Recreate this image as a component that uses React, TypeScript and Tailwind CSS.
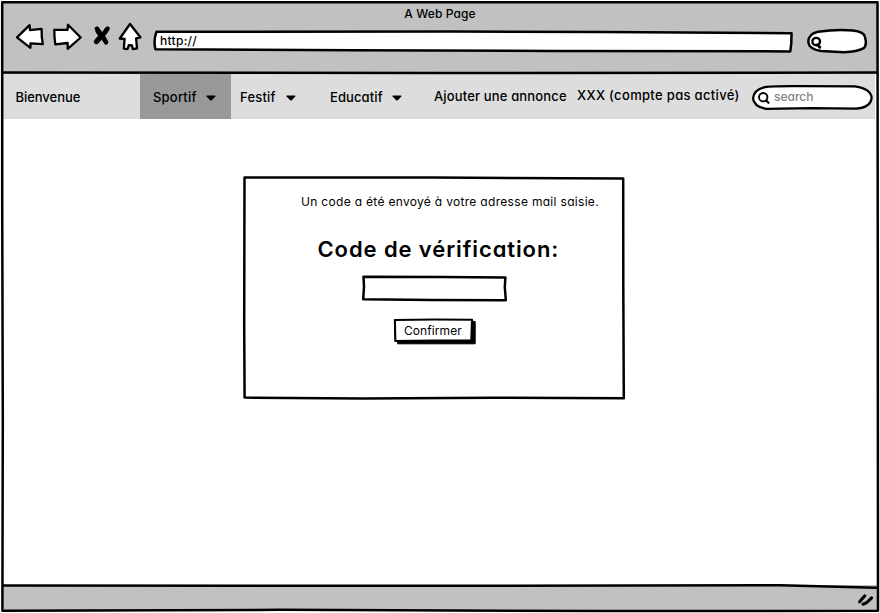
import type { ReactNode } from 'react';

const font =
  "font-['Inter','Noto_Sans',sans-serif] font-medium [font-feature-settings:'cv11'_1,'ss03'_1] text-black";

/* Pen outline laid over the box that holds it, in that box's own pixels. */
function Outline({ children }: { children: ReactNode }) {
  return (
    <svg
      aria-hidden="true"
      className="pointer-events-none absolute inset-0 h-full w-full overflow-visible"
      fill="none"
      stroke="black"
      strokeWidth="2.5"
      strokeLinejoin="round"
      strokeLinecap="round"
    >
      {children}
    </svg>
  );
}

function Caret({ className }: { className: string }) {
  return (
    <svg viewBox="0 0 10 6" className={`h-[6px] w-[10px] ${className}`}>
      <path d="M1 .5 9 .5Q10 .8 9.3 1.6L5.8 5.2Q5 5.9 4.2 5.2L.6 1.6Q0 .7 1 .5Z" />
    </svg>
  );
}

function Toolbar() {
  return (
    <div className="flex h-[50px] items-start pl-[15px]">
      <svg
        className="h-[32px] w-[128px] shrink-0"
        viewBox="15 22 128 32"
        fill="white"
        stroke="black"
        strokeWidth="2.3"
        strokeLinejoin="round"
        strokeLinecap="round"
      >
        <path d="M17 37.4 29.6 25.2 30 30.2 41.6 28.8 41.8 37 42.8 44.2 30.5 43.3 30.4 47.8Z" />
        <path d="M80.7 37.5 68 24.8 67.5 29.8 54.3 29.8 54.5 37 55.3 44.4 67.6 43 67.7 48.8Z" />
        <path d="M130 24 140.4 37.3 136.1 38.3 137 48.4 132.8 49.1 132 45.4 128.8 45.2 127.6 49 123.8 48.6 124.6 39 119.8 38.5Z" />
        <path
          fill="black"
          strokeWidth="1"
          d="M95.2 28.2Q96 26.2 98 27L102.2 32.8 105.8 27.6Q108 26 109.4 27.8Q109.4 30.5 104.6 35.8L108 42Q107.8 44.4 105.4 44.4L101.8 39.2 97.3 43.9Q95 44.4 94 42Q94.8 39.4 98.6 35.8Q95.2 32 95.2 28.2Z"
        />
      </svg>
      <div className="relative ml-[10px] mt-[9px] flex h-[21px] w-[640px] items-center pl-[7px]">
        <Outline>
          <path
            fill="white"
            d="M3.5 .8 300 .6 450 1 638.5 2.2Q638.7 12 637.3 20.4L400 20 200 19.3 2.4 18.3Q.2 9 3.5 .8Z"
          />
        </Outline>
        <span className="relative pb-[2px] text-[12px] leading-[18px] tracking-[0.3px]">http://</span>
      </div>
      <div className="relative ml-[14px] mt-[7px] flex h-[24px] w-[60px] items-center">
        <Outline>
          <path
            fill="white"
            d="M11 2.8Q30 0 46 1.6Q57 2.8 58 8Q60.2 16 56.8 19.2Q50 23 37 23.2L14 22Q1.8 20 1.3 13Q1.6 4.6 11 2.8Z"
          />
          <ellipse cx="9.2" cy="12.6" rx="3.8" ry="3.7" strokeWidth="2.4" />
          <path strokeWidth="2.9" d="M10.4 15.8 12.8 18.2" />
        </Outline>
      </div>
    </div>
  );
}

function Nav() {
  return (
    <nav className="flex h-[45px] w-[872px] items-center bg-[#dddddd] pt-px text-[13px] leading-[20px] whitespace-nowrap">
      <span className="w-[137px] pl-[12.5px] tracking-[-0.05px]">Bienvenue</span>
      <div className="-mt-px flex h-[45px] w-[91px] items-center bg-[#999999] pt-px pl-[13px]">
        <span className="w-[53px] tracking-[0.2px]">Sportif</span>
        <Caret className="mt-[2px]" />
      </div>
      <div className="flex w-[90px] items-center pl-[9px]">
        <span className="w-[46px] tracking-[0.2px]">Festif</span>
        <Caret className="mt-[2px]" />
      </div>
      <div className="flex w-[113px] items-center pl-[9px]">
        <span className="w-[62px] tracking-[0.1px]">Educatif</span>
        <Caret className="mt-[2px]" />
      </div>
      <span className="w-[143px] pb-[2px] tracking-[0.15px]">Ajouter une annonce</span>
      <span className="w-[175px] pb-[4px] tracking-[0.33px]">XXX (compte pas activé)</span>
      <div className="relative flex h-[25px] w-[121px] items-center pl-[22px]">
        <Outline>
          <path
            fill="white"
            strokeWidth="2.2"
            d="M13 2.2Q20 .9 50 1.2L103 1.4Q119.3 4 119.6 13Q118.5 22.5 104 23.6L60 23.2 14 23.8Q2 21.5 1 13.5Q1.8 4.6 13 2.2Z"
          />
          <ellipse cx="11.2" cy="12.2" rx="4.2" ry="4.2" strokeWidth="1.9" />
          <path strokeWidth="2.2" d="M14.2 15.4 16.5 17.8" />
        </Outline>
        <span className="relative pb-[1px] text-[12px] text-[#838383]">search</span>
      </div>
    </nav>
  );
}

function VerificationCard() {
  return (
    <section className="relative ml-[240px] mt-[57px] flex h-[223px] w-[382px] flex-col items-start">
      <Outline>
        <path d="M1.5 1.6 190 1.6 380.2 2.5 380.3 110 380.8 222.2 250 221.8 120 222.4 1.6 221.6 1.2 150Z" />
      </Outline>
      <p className="ml-[58px] mt-[17px] text-[12px] leading-[18px] font-normal tracking-[0.31px] whitespace-nowrap">
        Un code a été envoyé à votre adresse mail saisie.
      </p>
      <h1 className="ml-[74.5px] mt-[22px] text-[22px] leading-[32px] font-semibold tracking-[0.9px] whitespace-nowrap">
        Code de vérification:
      </h1>
      <div className="relative ml-[119px] mt-[10px] h-[26px] w-[145px]">
        <Outline>
          <path d="M1.5 1.7 80 2 143.4 2.4 142.8 12 143.8 25.2 70 24.9 1.2 24.2 2 12Z" />
        </Outline>
      </div>
      <button className="relative ml-[151px] mt-[17px] flex h-[26px] w-[82px] items-center pl-[10px]">
        <Outline>
          <path fill="black" strokeWidth="1" d="M4 20H77V3L81.2 3.5 81.2 25.8 4 25.8Z" />
          <path fill="white" strokeWidth="2.1" d="M.9 2 40 1.5 78 1.8 77.3 22.3 40 22.6 1.3 23Z" />
        </Outline>
        <span className="relative text-[12px] leading-[18px] font-normal tracking-[0.08px]">Confirmer</span>
      </button>
    </section>
  );
}

export default function App() {
  return (
    <div className={`relative flex h-[613px] w-[880px] flex-col overflow-hidden bg-white pl-[3px] ${font}`}>
      <header className="mt-[2px] flex h-[72px] w-[874px] flex-col bg-[#c1c1c1]">
        <div className="h-[20px] pt-[3px] text-center text-[12px] leading-[18px] tracking-[0.1px]">
          A Web Page
        </div>
        <div className="-ml-[3px]">
          <Toolbar />
        </div>
      </header>
      <Nav />
      <main className="h-[466px]">
        <VerificationCard />
      </main>
      <footer className="flex h-[25px] w-[875px] items-center justify-end bg-[#c1c1c1] pr-[3px]">
        <svg
          className="mt-[4px] h-[14px] w-[18px]"
          viewBox="0 0 18 14"
          stroke="black"
          strokeWidth="3.1"
          strokeLinecap="round"
        >
          <path d="M2.6 8.8 7.8 2.8M6 11.2 9.5 9.8 14.6 4.8" fill="none" />
        </svg>
      </footer>
      <Outline>
        <path d="M2.2 2.2 440 2.2 877.5 2.2 877.8 300 878 610.8 600 611 280 609.8 2.4 610.8 2.8 420 2.2 200Z" />
        <path d="M3 72.5 440 73 876 72.5M3 585.5 440 585.8 780 585.2 876 587.7" />
      </Outline>
    </div>
  );
}
